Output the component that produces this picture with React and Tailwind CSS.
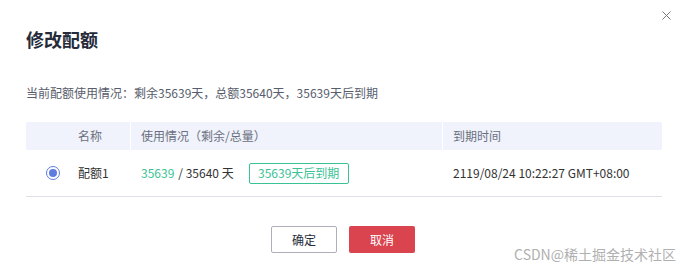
import { X } from 'lucide-react';

const font = { fontFamily: '"Noto Sans CJK SC", "Noto Sans", sans-serif' };

export default function App() {
  return (
    <div style={font} className="relative h-[276px] w-[686px] overflow-hidden bg-white text-[#333]">
      <button className="absolute right-[12px] top-[8px] text-[#777]">
        <X className="h-[15px] w-[15px]" strokeWidth={1.6} />
      </button>

      <div className="px-[26px] pt-[26px]">
        <h1 className="text-[18px] font-bold leading-[26px] text-[#252b3a]">修改配额</h1>

        <p className="mt-[32px] text-[12px] leading-[18px] text-[#575d6c]">
          当前配额使用情况：剩余35639天，总额35640天，35639天后到期
        </p>

        <div className="mt-[20px] w-[636px]">
          <div className="flex h-[28px] items-center bg-[#f0f3fb] text-[12px] text-[#6b7080]">
            <div className="w-[104px] pl-[52px]">名称</div>
            <div className="h-full w-[312px] border-l border-white pl-[10px] leading-[28px]">使用情况（剩余/总量）</div>
            <div className="h-full flex-1 border-l border-white pl-[10px] leading-[28px]">到期时间</div>
          </div>
          <div className="flex h-[47px] items-center border-b border-[#dfe1e6] text-[12px]">
            <div className="flex w-[104px] items-center">
              <span className="ml-[20px] flex h-[14px] w-[14px] items-center justify-center rounded-full border border-[#5e7ce0]">
                <span className="h-[8px] w-[8px] rounded-full bg-[#5e7ce0]" />
              </span>
              <span className="ml-[18px]">配额1</span>
            </div>
            <div className="flex w-[312px] items-center pl-[11px]">
              <span className="text-[#3ac295]">35639</span>
              <span className="ml-[4px]">/ 35640 天</span>
              <span className="ml-[15px] flex h-[21px] w-[100px] items-center justify-center rounded-[2px] border border-[#3ac295] text-[#3ac295]">
                35639天后到期
              </span>
            </div>
            <div className="flex-1 pl-[11px]">2119/08/24 10:22:27 GMT+08:00</div>
          </div>
        </div>

        <div className="mt-[29px] flex justify-center gap-[12px]">
          <button className="h-[27px] w-[66px] rounded-[2px] border border-[#adb0b8] bg-white text-[12px] text-[#252b3a]">
            确定
          </button>
          <button className="h-[27px] w-[66px] rounded-[2px] bg-[#d9444f] text-[12px] text-white">
            取消
          </button>
        </div>
      </div>

      <div className="absolute bottom-[14px] right-[10px] text-[14px] leading-[16px] text-[#b0b0b0]">
        CSDN@稀土掘金技术社区
      </div>
    </div>
  );
}
